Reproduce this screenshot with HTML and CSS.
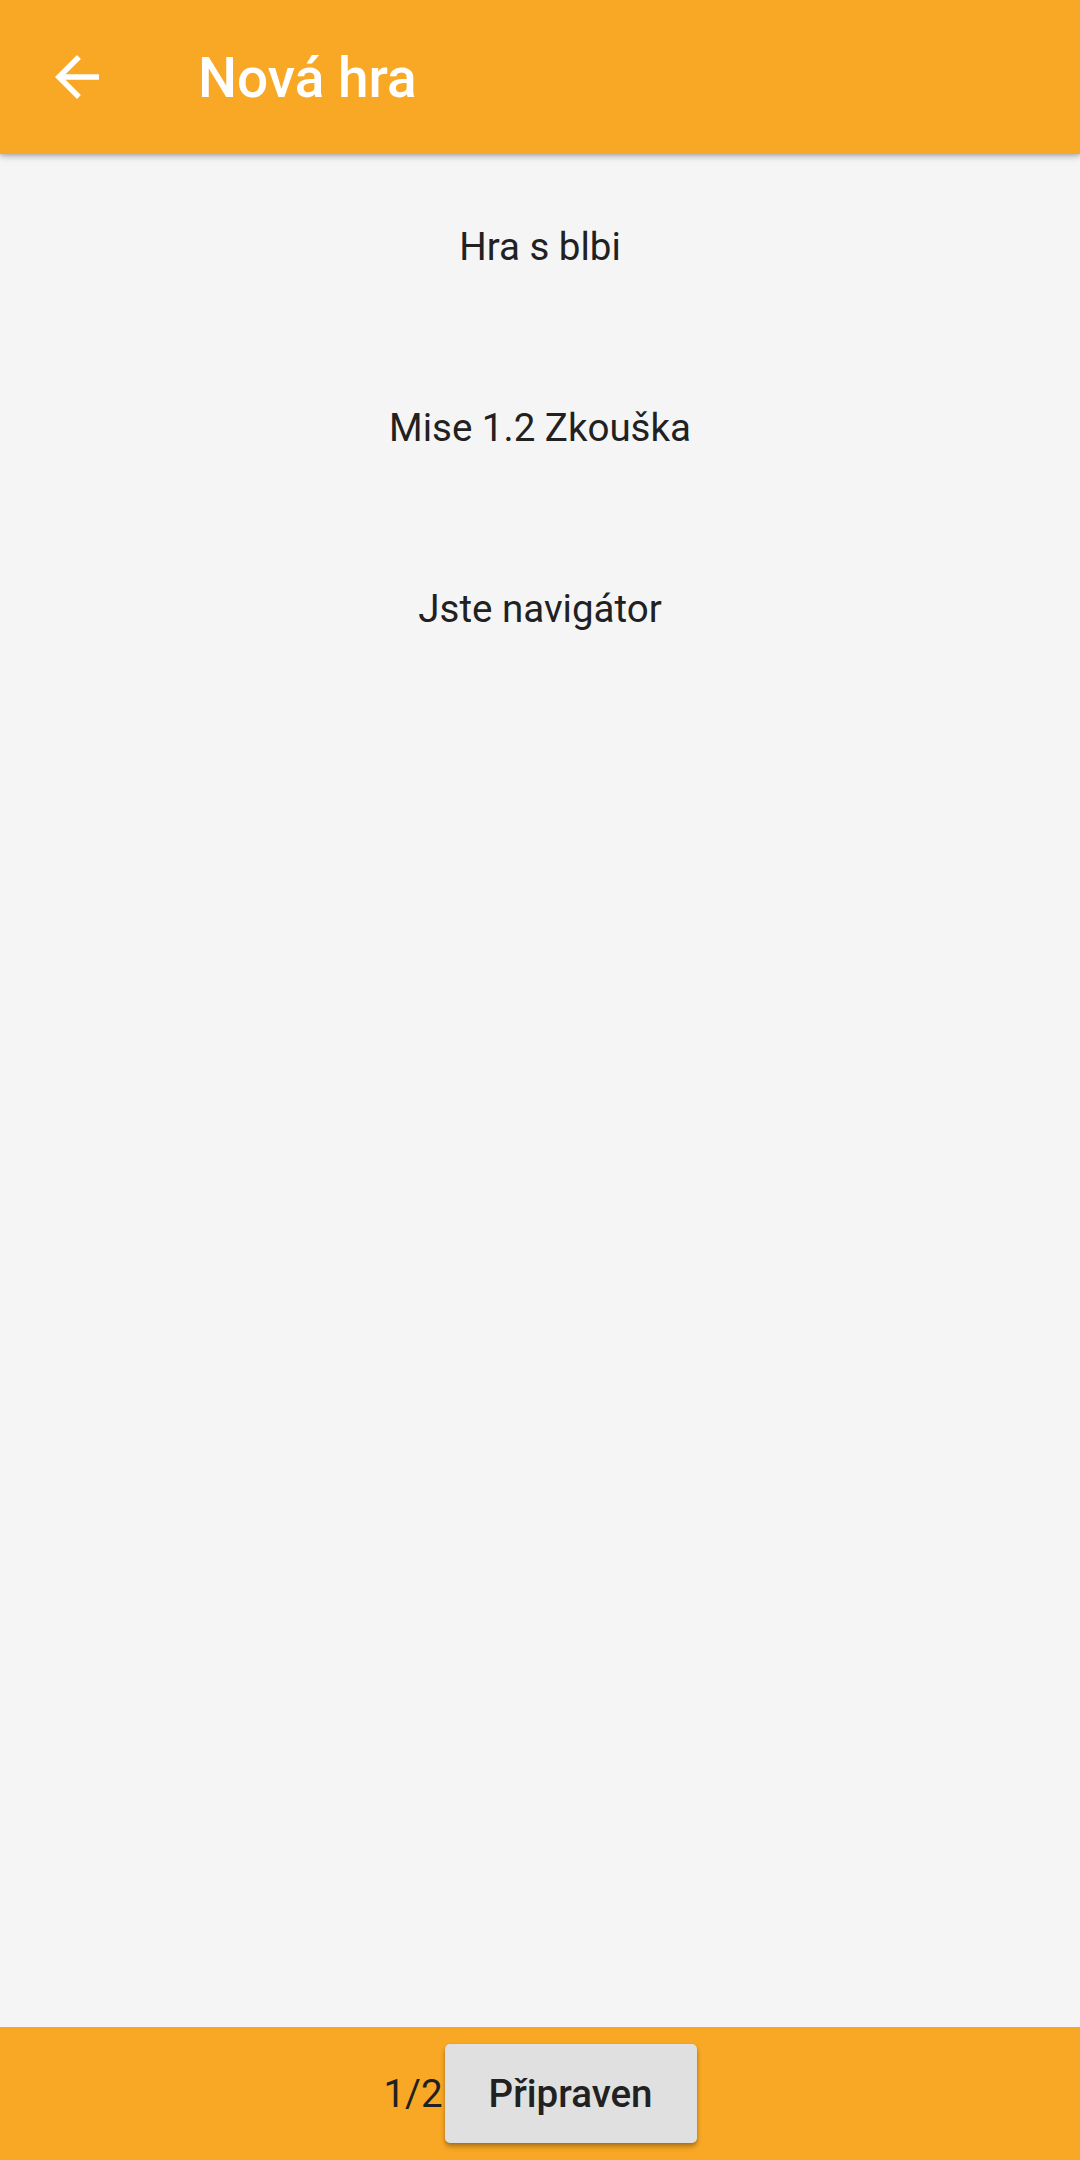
FILE: index.html
```html
<!DOCTYPE html>
<html lang="cs">
<head>
<meta charset="utf-8">
<title>Nová hra</title>
<link rel="stylesheet" href="styles.css">
</head>
<body>
<div class="screen">
  <header class="appbar">
    <div class="leading">
      <svg class="back" viewBox="0 0 24 24" aria-hidden="true"><path d="M20 11H7.83l5.59-5.59L12 4l-8 8 8 8 1.41-1.41L7.83 13H20v-2z" fill="#fff"/></svg>
    </div>
    <h1 class="title">Nová hra</h1>
  </header>
  <main class="content">
    <p class="line">Hra s blbi</p>
    <p class="line">Mise 1.2 Zkouška</p>
    <p class="line">Jste navigátor</p>
  </main>
  <footer class="bottombar">
    <span class="counter">1/2</span>
    <button class="ready">Připraven</button>
  </footer>
</div>
</body>
</html>
```

FILE: styles.css
```css
html, body {
  margin: 0;
  padding: 0;
}
body {
  font-family: Roboto, "Noto Sans", sans-serif;
  background: #f5f5f5;
  color: #212121;
}
.screen {
  width: 1080px;
  height: 2160px;
  display: flex;
  flex-direction: column;
  overflow: hidden;
}
.appbar {
  height: 154px;
  flex: 0 0 154px;
  background: #f9a825;
  display: flex;
  align-items: center;
  box-shadow: 0 3px 6px rgba(0,0,0,0.22), 0 1px 3px rgba(0,0,0,0.12);
  position: relative;
  z-index: 2;
}
.leading {
  width: 154px;
  height: 154px;
  display: flex;
  align-items: center;
  justify-content: center;
}
.back {
  width: 66px;
  height: 66px;
  display: block;
}
.title {
  margin: 0;
  padding-left: 44px;
  padding-top: 2px;
  font-size: 55px;
  font-weight: 500;
  color: #fff;
  line-height: 64px;
}
.content {
  flex: 1;
  display: flex;
  flex-direction: column;
  align-items: center;
  padding-top: 70px;
  gap: 136px;
}
.line {
  margin: 0;
  font-size: 38.5px;
  line-height: 45px;
  color: #212121;
}
.bottombar {
  height: 133px;
  flex: 0 0 133px;
  background: #f9a825;
  display: flex;
  align-items: center;
  justify-content: center;
}
.counter {
  font-size: 38.5px;
  color: #212121;
  margin-right: 2px;
}
.ready {
  height: 99px;
  padding: 0 44px;
  border: none;
  border-radius: 5px;
  background: #e0e0e0;
  font-family: Roboto, "Noto Sans", sans-serif;
  font-size: 38.5px;
  font-weight: 500;
  color: #212121;
  box-shadow: 0 4px 5px rgba(0,0,0,0.25), 0 1px 3px rgba(0,0,0,0.15);
}
```
